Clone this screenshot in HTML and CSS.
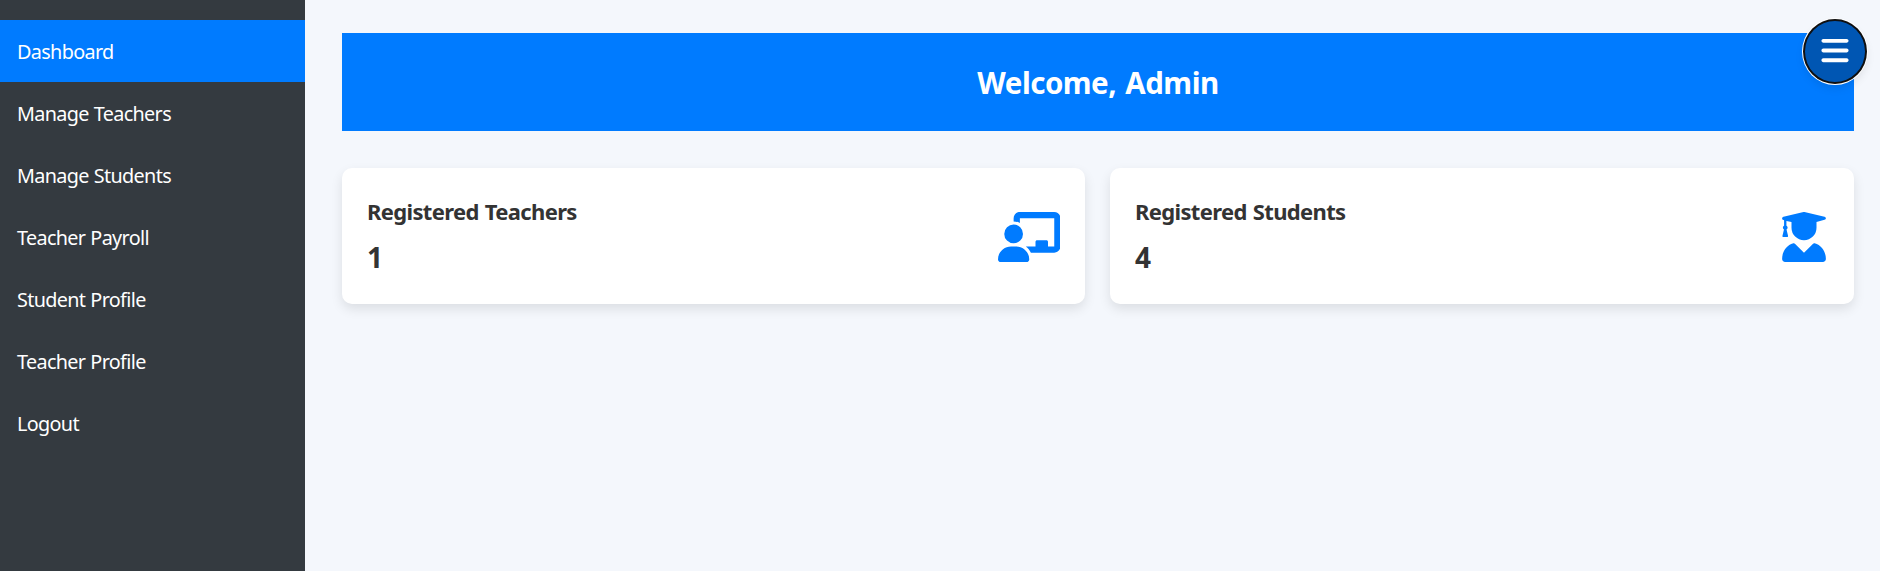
FILE: index.html
```html
<!DOCTYPE html>
<html lang="en">
<head>
<meta charset="utf-8">
<title>Admin Dashboard</title>
<link rel="stylesheet" href="styles.css">
</head>
<body>
<div class="layout">
  <nav class="sidebar">
    <a class="nav-link active">Dashboard</a>
    <a class="nav-link">Manage Teachers</a>
    <a class="nav-link">Manage Students</a>
    <a class="nav-link">Teacher Payroll</a>
    <a class="nav-link">Student Profile</a>
    <a class="nav-link">Teacher Profile</a>
    <a class="nav-link">Logout</a>
  </nav>
  <main class="content">
    <header class="banner"><h1>Welcome, Admin</h1></header>
    <section class="cards">
      <article class="card">
        <div>
          <h2>Registered Teachers</h2>
          <p class="count">1</p>
        </div>
        <svg class="icon icon-teacher" viewBox="0 0 640 512"><path d="M160 64c0-35.300 28.700-64 64-64H576c35.300 0 64 28.700 64 64V352c0 35.300-28.700 64-64 64H336.800c-11.800-25.500-29.900-47.500-52.400-64H384V304c0-8.800 7.200-16 16-16h96c8.800 0 16 7.200 16 16v48h64V64L224 64v49.100C205.200 102.200 183.300 96 160 96V64zm0 64a96 96 0 1 1 0 192 96 96 0 1 1 0-192zM133.300 352h53.300C260.300 352 320 411.700 320 485.300c0 14.700-11.900 26.700-26.700 26.700H26.700C11.900 512 0 500.100 0 485.300C0 411.700 59.700 352 133.300 352z"/></svg>
      </article>
      <article class="card">
        <div>
          <h2>Registered Students</h2>
          <p class="count">4</p>
        </div>
        <svg class="icon icon-student" viewBox="0 0 448 512"><path d="M219.300 .5c3.100-.6 6.300-.6 9.400 0l205 48c19 5 19 27 0 32L352 102.900V160a128 128 0 0 1-256 0V102.900L44 91v48.700c7 4.200 12 11.500 12 20.300 0 8.400-4.600 15.400-11.100 19.700L60.500 242c1.700 6.900-2.100 14-7.600 14H11.100c-5.500 0-9.300-7.100-7.600-14l15.600-62.300C12.600 175.400 8 168.400 8 160c0-8.800 5-16.100 12-20.300V84l-6-2c-19-5-19-28 0-33.500zM115 320c6-2 12 0 16 4l93 92 93-92c4-4 10-6 16-4C404 340 448 404 448 481.300c0 17-13.800 30.700-30.700 30.700H30.700C13.800 512 0 498.200 0 481.300c0-77 44-141 115-161.300z"/></svg>
      </article>
    </section>
  </main>
</div>
<button class="menu-toggle" aria-label="Toggle menu">
  <svg viewBox="0 0 448 512"><path d="M0 96C0 78.300 14.300 64 32 64H416c17.700 0 32 14.300 32 32s-14.300 32-32 32H32C14.300 128 0 113.700 0 96zM0 256c0-17.700 14.300-32 32-32H416c17.700 0 32 14.300 32 32s-14.300 32-32 32H32c-17.700 0-32-14.300-32-32zM448 416c0 17.700-14.300 32-32 32H32c-17.700 0-32-14.300-32-32s14.300-32 32-32H416c17.700 0 32 14.300 32 32z"/></svg>
</button>
</body>
</html>
```
FILE: styles.css
```css
* { box-sizing: border-box; margin: 0; padding: 0; }
body {
  font-family: "Segoe UI", "Noto Sans", "Open Sans", sans-serif;
  background: #f4f7fc;
  color: #333;
  overflow: hidden;
}
.layout { display: flex; height: 100vh; }
.sidebar {
  width: 305px;
  flex: none;
  padding-top: 20px;
  background: #343a40;
}
.nav-link {
  display: flex;
  align-items: center;
  height: 62px;
  padding: 1px 0 0 17px;
  color: #fff;
  font-size: 19.8px;
  letter-spacing: -0.65px;
  word-spacing: 0.5px;
}
.nav-link.active { background: #007bff; }
.content {
  flex: 1;
  padding: 33px 26px 0 37px;
}
.banner {
  display: flex;
  align-items: center;
  justify-content: center;
  height: 98px;
  padding-top: 2px;
  background: #007bff;
  color: #fff;
}
.banner h1 { font-size: 29.5px; font-weight: 700; line-height: 40px; letter-spacing: -0.5px; word-spacing: 2px; }
.cards {
  display: grid;
  grid-template-columns: 743px 744px;
  gap: 25px;
  margin-top: 37px;
}
.card {
  display: flex;
  align-items: center;
  justify-content: space-between;
  height: 136px;
  padding: 0 25px;
  background: #fff;
  border-radius: 10px;
  box-shadow: 0 5px 12px rgba(0, 0, 0, 0.1);
}
.card h2 { font-size: 22px; line-height: 30px; letter-spacing: -0.65px; word-spacing: 1px; }
.count { margin-top: 13px; font-size: 28px; font-weight: 700; line-height: 37px; }
.icon { height: 50px; fill: #007bff; margin-top: 2px; }
.icon-teacher { width: 62.5px; }
.icon-student { width: 44px; margin-right: 3px; }
.menu-toggle {
  position: absolute;
  top: 20px;
  left: 1804px;
  display: flex;
  align-items: center;
  justify-content: center;
  width: 62px;
  height: 63px;
  padding-bottom: 2px;
  border: none;
  border-radius: 50%;
  background: #0056b3;
  outline: 2px solid #101010;
  outline-offset: -1px;
  box-shadow: 0 0 0 2px #fff, 0 5px 10px rgba(0, 0, 0, 0.1);
}
.menu-toggle svg { width: 28px; height: 31px; fill: #fff; }
```
